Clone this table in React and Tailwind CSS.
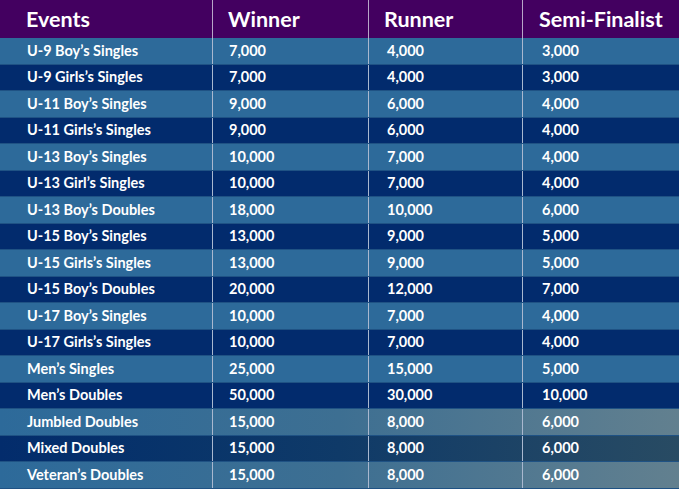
import React from 'react';

const rows = [
  ['U-9 Boy’s Singles', '7,000', '4,000', '3,000'],
  ['U-9 Girls’s Singles', '7,000', '4,000', '3,000'],
  ['U-11 Boy’s Singles', '9,000', '6,000', '4,000'],
  ['U-11 Girls’s Singles', '9,000', '6,000', '4,000'],
  ['U-13 Boy’s Singles', '10,000', '7,000', '4,000'],
  ['U-13 Girl’s Singles', '10,000', '7,000', '4,000'],
  ['U-13 Boy’s Doubles', '18,000', '10,000', '6,000'],
  ['U-15 Boy’s Singles', '13,000', '9,000', '5,000'],
  ['U-15 Girls’s Singles', '13,000', '9,000', '5,000'],
  ['U-15 Boy’s Doubles', '20,000', '12,000', '7,000'],
  ['U-17 Boy’s Singles', '10,000', '7,000', '4,000'],
  ['U-17 Girls’s Singles', '10,000', '7,000', '4,000'],
  ['Men’s Singles', '25,000', '15,000', '5,000'],
  ['Men’s Doubles', '50,000', '30,000', '10,000'],
  ['Jumbled Doubles', '15,000', '8,000', '6,000'],
  ['Mixed Doubles', '15,000', '8,000', '6,000'],
  ['Veteran’s Doubles', '15,000', '8,000', '6,000'],
];

const rowBg = (i) => {
  const light = i % 2 === 0;
  if (i >= 14) {
    return light
      ? 'bg-gradient-to-r from-[#2d6a9a] via-[#3d6f92] to-[#62808f]'
      : 'bg-gradient-to-r from-[#032c6c] via-[#0f3a68] to-[#284b63]';
  }
  return light ? 'bg-[#2d6a9a]' : 'bg-[#022b6d]';
};

const App = () => {
  return (
    <div className="w-[679px] h-[489px] overflow-hidden bg-[#022b6d] text-white font-['Lato','Liberation_Sans',sans-serif] font-bold">
      <div className="flex h-[38px] bg-[#430060] text-[21.5px] items-center">
        <div className="w-[213px] h-full flex items-center pl-[26px] border-r border-[#b8a6c8]">Events</div>
        <div className="w-[156px] h-full flex items-center pl-[15px] border-r border-[#b8a6c8]">Winner</div>
        <div className="w-[154px] h-full flex items-center pl-[15px] border-r border-[#b8a6c8]">Runner</div>
        <div className="flex-1 h-full flex items-center pl-[16px]">Semi-Finalist</div>
      </div>
      {rows.map((r, i) => (
        <div key={i} className={`flex h-[26.5px] text-[14.5px] items-center border-b border-[#1f5284] ${rowBg(i)}`}>
          <div className="w-[213px] h-full flex items-center pl-[27px] border-r border-[#a9b8cf]">{r[0]}</div>
          <div className="w-[156px] h-full flex items-center pl-[16px] border-r border-[#a9b8cf]">{r[1]}</div>
          <div className="w-[154px] h-full flex items-center pl-[18px] border-r border-[#a9b8cf]">{r[2]}</div>
          <div className="flex-1 h-full flex items-center pl-[19px]">{r[3]}</div>
        </div>
      ))}
    </div>
  );
};

export default App;
